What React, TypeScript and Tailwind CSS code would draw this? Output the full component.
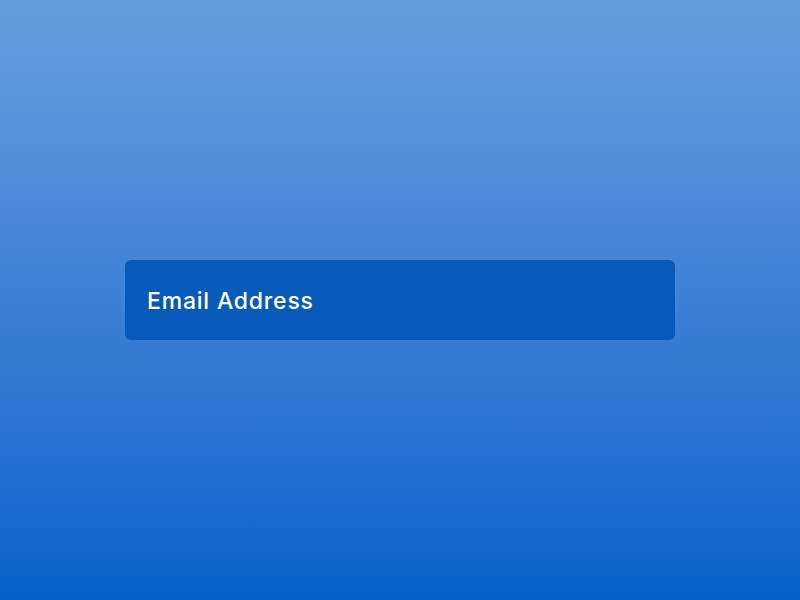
export default function App() {
  return (
    <div className="w-[800px] h-[600px] bg-gradient-to-b from-[#669edc] to-[#0561cc] flex items-center justify-center">
      <div className="w-[550px] h-[80px] rounded-[6px] bg-[#085ab8] flex items-center pl-[22px] pt-[3px]">
        <span className="text-white text-[23px] font-medium tracking-[0.8px] font-['Inter',sans-serif]">
          Email Address
        </span>
      </div>
    </div>
  );
}
